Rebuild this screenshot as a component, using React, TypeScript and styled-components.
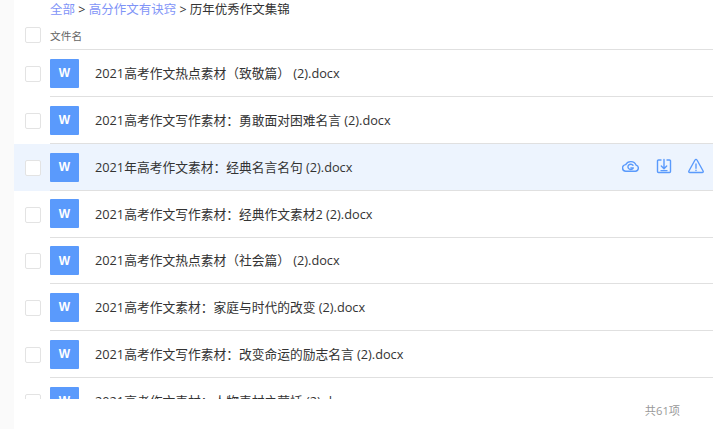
import React from "react";
import styled, { createGlobalStyle } from "styled-components";

const Global = createGlobalStyle`
  html, body { margin: 0; padding: 0; background: #fff; overflow: hidden; }
  body { font-family: "Open Sans", "Noto Sans CJK SC", sans-serif; }
`;
const Page = styled.div`
  position: relative; width: 713px; height: 429px; display: flex; overflow: hidden; background: #fff;
`;
const Rail = styled.div`
  width: 14px; flex: none; background: #fafafa;
`;
const Main = styled.div`
  flex: 1; min-width: 0; display: flex; flex-direction: column;
`;
const Crumbs = styled.div`
  height: 19px; box-sizing: border-box; padding: 1px 0 0 36px; font-size: 12.5px; line-height: 17px; color: #333; white-space: nowrap;
`;
const CrumbLink = styled.span`
  color: #7f94f7;
`;
const HeadRow = styled.div`
  height: 31.4px; display: flex; align-items: center; padding-left: 11px;
`;
const Box = styled.span`
  width: 14px; height: 14px; flex: none; margin-top: 1px;
  border: 1px solid #e3e3e3; border-radius: 2px; background: #fff;
`;
const HeadCell = styled.div`
  flex: 1; height: 31.4px; margin-left: 9px; padding-top: 2px; display: flex; align-items: center;
  border-bottom: 1px solid #e0e0e0; font-size: 10.7px; color: #666; box-sizing: border-box;
`;
const List = styled.div`
  height: 348.6px; overflow: hidden;
`;
const Row = styled.div<{ $active?: boolean }>`
  height: 46.8px; display: flex; align-items: center; padding-left: 11px;
  background: ${(p) => (p.$active ? "#edf4fe" : "#fff")};
`;
const RowBody = styled.div`
  flex: 1; min-width: 0; height: 100%; margin-left: 9px; display: flex; align-items: center;
  box-sizing: border-box; border-bottom: 1px solid #e0e0e0;
`;
const FileIcon = styled.div`
  width: 29px; height: 29px; flex: none; margin-top: 0.4px; background: #5a9afc; color: #fff; border-radius: 1px;
  display: flex; align-items: center; justify-content: center;
  font-size: 12px; font-weight: 700; font-family: "Liberation Sans", sans-serif;
`;
const Name = styled.div`
  margin: 0 0 1.2px 16px; flex: 1; font-size: 12.75px; color: #333; white-space: nowrap;
`;
const Actions = styled.div`
  display: flex; align-items: center; gap: 16px; padding-right: 8px;
`;
const Footer = styled.div`
  position: absolute; right: 33px; top: 402px; font-size: 11.2px; color: #999;
`;
const Ico = styled.svg`
  width: 17px; height: 17px; fill: none; stroke: #5a9afc; stroke-width: 1.4;
  stroke-linecap: round; stroke-linejoin: round; display: block;
`;

const files = [
  "2021高考作文热点素材（致敬篇） (2).docx",
  "2021高考作文写作素材：勇敢面对困难名言 (2).docx",
  "2021年高考作文素材：经典名言名句 (2).docx",
  "2021高考作文写作素材：经典作文素材2 (2).docx",
  "2021高考作文热点素材（社会篇） (2).docx",
  "2021高考作文素材：家庭与时代的改变 (2).docx",
  "2021高考作文写作素材：改变命运的励志名言 (2).docx",
  "2021高考作文素材：人物素材之蒙恬 (2).docx",
];

const CloudIcon = () => (
  <Ico viewBox="0 0 17 17">
    <path d="M4.200 13.200H13.400A3.100 3.100 0 0 0 14 7.100 5.600 5.300 0 0 0 3.700 6.600 3.400 3.300 0 0 0 4.200 13.200z" />
    <path d="M11 7.300A2.800 2.600 0 1 0 11.300 9.900H8.900" />
  </Ico>
);
const SaveIcon = () => (
  <Ico viewBox="0 0 17 17">
    <path d="M6 2H3.500a1 1 0 0 0-1 1v10.500a1 1 0 0 0 1 1h11a1 1 0 0 0 1-1V3a1 1 0 0 0-1-1h-2.500" />
    <path d="M9 1.500v9M6.300 8l2.700 2.700L11.700 8M6 12.600h6" />
  </Ico>
);
const WarnIcon = () => (
  <Ico viewBox="0 0 17 17">
    <path d="M7 2 .9 13a1 1 0 0 0 .9 1.500h12.400a1 1 0 0 0 .9-1.500L9 2a1.100 1.100 0 0 0-2 0z" />
    <path d="M8 6v4.300M8 12.200v.3" />
  </Ico>
);

export default function App() {
  return (
    <Page>
      <Global />
      <Rail />
      <Main>
        <Crumbs>
          <CrumbLink>全部</CrumbLink> &gt; <CrumbLink>高分作文有诀窍</CrumbLink> &gt; 历年优秀作文集锦
        </Crumbs>
        <HeadRow>
          <Box />
          <HeadCell>文件名</HeadCell>
        </HeadRow>
        <List>
          {files.map((f, i) => (
            <Row key={f} $active={i === 2}>
              <Box />
              <RowBody>
                <FileIcon>W</FileIcon>
                <Name>{f}</Name>
                {i === 2 && (
                  <Actions>
                    <CloudIcon />
                    <SaveIcon />
                    <WarnIcon />
                  </Actions>
                )}
              </RowBody>
            </Row>
          ))}
        </List>
      </Main>
      <Footer>共61项</Footer>
    </Page>
  );
}
